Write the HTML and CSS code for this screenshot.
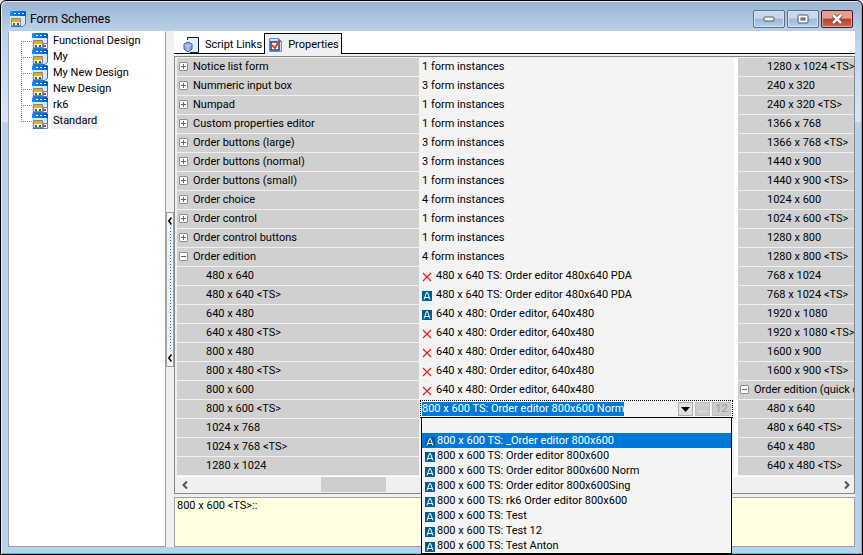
FILE: index.html
```html
<!DOCTYPE html>
<html lang="en">
<head>
    <meta charset="UTF-8">
    <meta name="viewport" content="width=device-width, initial-scale=1.0">
    <title>Form Schemes</title>
    <link rel="stylesheet" href="styles.css">
</head>
<body>
    <!-- shared icons -->
    <svg class="defs">
        <defs>
            <linearGradient id="bar" x1="0" y1="0" x2="1" y2="0">
                <stop offset="0" stop-color="#1a8cf0"/>
                <stop offset="1" stop-color="#0058b8"/>
            </linearGradient>
            <symbol id="form" viewBox="0 0 16 16">
                <path d="M0 4h16v9l-3 3H0z" fill="#d4e9fb"/>
                <path d="M0 1l1-1h14l1 1v4H0z" fill="url(#bar)"/>
                <path d="M4 2h2v1H4zM8 2h2v1H8zM12 2h2v1h-2z" fill="#fff"/>
                <path d="M15.500 5v8l-2.500 2.500H1" fill="none" stroke="#2a78cc"/>
                <path d="M1.500 7.500h9v7h-9z" fill="#f4f4f4" stroke="#85858d"/>
                <path d="M2 8h8v3H2z" fill="#e5b012"/>
                <path d="M3 12h2v2H3z" fill="#178a20"/>
                <path d="M7 12h2v2H7z" fill="#1d50d8"/>
            </symbol>
            <symbol id="formlock" viewBox="0 0 16 16">
                <use href="#form"/>
                <path d="M11.500 10.500h4v5h-4z" fill="#fff" stroke="#6d7ca8"/>
                <path d="M12 12h2v2h-2z" fill="#f02838"/>
            </symbol>
            <symbol id="cross" viewBox="0 0 10 10">
                <path d="M1 1l8 8M9 1l-8 8" stroke="#f01414" stroke-width="1.100"/>
            </symbol>
            <symbol id="abox" viewBox="0 0 10 10">
                <path d="M0 0h10v10H0z" fill="#005f98"/>
                <path d="M2 8.500L4.500 1.500h1L8 8.500M3 6.500h4" fill="none" stroke="#fff"/>
            </symbol>
        </defs>
    </svg>

    <div class="window">
        <header class="titlebar">
            <svg class="icon16"><use href="#form"/></svg>
            <h1>Form Schemes</h1>
            <button class="winbtn" aria-label="Minimize"><svg width="12" height="6"><rect x="1" y="1" width="10" height="4" rx="1" fill="#fff" stroke="#535666"/></svg></button>
            <button class="winbtn" aria-label="Maximize"><svg width="12" height="10"><rect x="1" y="1" width="10" height="8" rx="1" fill="#fff" stroke="#535666"/><rect x="4" y="4" width="4" height="2" fill="#8ba9cc" stroke="#535666"/></svg></button>
            <button class="winbtn close" aria-label="Close"><svg width="12" height="10"><path d="M2 1l8 8M10 1L2 9" stroke="#5c3434" stroke-width="4"/><path d="M2 1l8 8M10 1L2 9" stroke="#fff" stroke-width="2.500"/></svg></button>
        </header>

        <div class="client">
            <ul class="tree">
                <li><svg class="icon16"><use href="#formlock"/></svg><span>Functional Design</span></li>
                <li><svg class="icon16"><use href="#form"/></svg><span>My</span></li>
                <li><svg class="icon16"><use href="#form"/></svg><span>My New Design</span></li>
                <li><svg class="icon16"><use href="#formlock"/></svg><span>New Design</span></li>
                <li><svg class="icon16"><use href="#formlock"/></svg><span>rk6</span></li>
                <li class="current"><svg class="icon16"><use href="#formlock"/></svg><span>Standard</span></li>
            </ul>

            <div class="splitter">
                <button class="grip" aria-label="Collapse">
                    <svg width="4" height="8"><path d="M3.500 .5L.8 4l2.700 3.500" fill="none" stroke="#000" stroke-width="1.500"/></svg>
                    <span></span>
                    <svg width="4" height="8"><path d="M3.500 .5L.8 4l2.700 3.500" fill="none" stroke="#000" stroke-width="1.500"/></svg>
                </button>
            </div>

            <main class="content">
                <nav class="tabs">
                    <button class="tab">
                        <svg class="icon16" viewBox="0 0 16 16"><path d="M4.500 .5h11v15h-8l-3-3z" fill="#dceefb"/><path d="M4.500 3V.5h11v15H7" fill="none" stroke="#101820"/><path d="M1 7l4-2 4 2v5l-4 3-4-3z" fill="#91a8e8" stroke="#3f5ba0"/><path d="M1.500 7.500L5 9l3.500-1.500M5 9v5" fill="none" stroke="#c9d6fb"/></svg>
                        Script Links
                    </button>
                    <button class="tab active">
                        <svg class="icon16" viewBox="0 0 16 16"><path d="M2.500 1.500h9l3 3v10h-12z" fill="#c4e2fb" stroke="#5b93cf"/><path d="M11 1v4h4z" fill="#3d7fd0"/><path d="M4 5h8v8H4z" fill="#fff" stroke="#16418a" stroke-width="1.500"/><path d="M5 8l3 3 4-7" fill="none" stroke="#e9401c" stroke-width="2"/></svg>
                        Properties
                    </button>
                </nav>

                <section class="grid">
                    <div class="panes">
                        <table class="pane main">
                            <tr><th><button class="exp plus"></button>Notice list form</th><td>1 form instances</td></tr>
                            <tr><th><button class="exp plus"></button>Nummeric input box</th><td>3 form instances</td></tr>
                            <tr><th><button class="exp plus"></button>Numpad</th><td>1 form instances</td></tr>
                            <tr><th><button class="exp plus"></button>Custom properties editor</th><td>1 form instances</td></tr>
                            <tr><th><button class="exp plus"></button>Order buttons (large)</th><td>3 form instances</td></tr>
                            <tr><th><button class="exp plus"></button>Order buttons (normal)</th><td>3 form instances</td></tr>
                            <tr><th><button class="exp plus"></button>Order buttons (small)</th><td>1 form instances</td></tr>
                            <tr><th><button class="exp plus"></button>Order choice</th><td>4 form instances</td></tr>
                            <tr><th><button class="exp plus"></button>Order control</th><td>1 form instances</td></tr>
                            <tr><th><button class="exp plus"></button>Order control buttons</th><td>1 form instances</td></tr>
                            <tr><th><button class="exp"></button>Order edition</th><td>4 form instances</td></tr>
                            <tr><th class="sub">480 x 640</th><td><svg class="mark"><use href="#cross"/></svg>480 x 640 TS: Order editor 480x640 PDA</td></tr>
                            <tr><th class="sub">480 x 640 &lt;TS&gt;</th><td><svg class="mark"><use href="#abox"/></svg>480 x 640 TS: Order editor 480x640 PDA</td></tr>
                            <tr><th class="sub">640 x 480</th><td><svg class="mark"><use href="#abox"/></svg>640 x 480: Order editor, 640x480</td></tr>
                            <tr><th class="sub">640 x 480 &lt;TS&gt;</th><td><svg class="mark"><use href="#cross"/></svg>640 x 480: Order editor, 640x480</td></tr>
                            <tr><th class="sub">800 x 480</th><td><svg class="mark"><use href="#cross"/></svg>640 x 480: Order editor, 640x480</td></tr>
                            <tr><th class="sub">800 x 480 &lt;TS&gt;</th><td><svg class="mark"><use href="#cross"/></svg>640 x 480: Order editor, 640x480</td></tr>
                            <tr><th class="sub">800 x 600</th><td><svg class="mark"><use href="#cross"/></svg>640 x 480: Order editor, 640x480</td></tr>
                            <tr>
                                <th class="sub"><label for="scheme">800 x 600 &lt;TS&gt;</label></th>
                                <td class="editing">
                                    <div class="editor">
                                        <input type="text" id="scheme" value="800 x 600 TS: Order editor 800x600 Norm">
                                        <button class="small" aria-label="Open list"><svg width="9" height="5"><path d="M0 0h9L4.500 5z"/></svg></button>
                                        <button class="small" disabled>...</button>
                                        <button class="small wide" disabled>12</button>
                                    </div>
                                    <ul class="options" role="listbox">
                                        <li role="option"></li>
                                        <li role="option" class="selected"><svg class="mark"><use href="#abox"/></svg>800 x 600 TS: _Order editor 800x600</li>
                                        <li role="option"><svg class="mark"><use href="#abox"/></svg>800 x 600 TS: Order editor 800x600</li>
                                        <li role="option"><svg class="mark"><use href="#abox"/></svg>800 x 600 TS: Order editor 800x600 Norm</li>
                                        <li role="option"><svg class="mark"><use href="#abox"/></svg>800 x 600 TS: Order editor 800x600Sing</li>
                                        <li role="option"><svg class="mark"><use href="#abox"/></svg>800 x 600 TS: rk6 Order editor 800x600</li>
                                        <li role="option"><svg class="mark"><use href="#abox"/></svg>800 x 600 TS: Test</li>
                                        <li role="option"><svg class="mark"><use href="#abox"/></svg>800 x 600 TS: Test 12</li>
                                        <li role="option"><svg class="mark"><use href="#abox"/></svg>800 x 600 TS: Test Anton</li>
                                    </ul>
                                </td>
                            </tr>
                            <tr><th class="sub">1024 x 768</th><td></td></tr>
                            <tr><th class="sub">1024 x 768 &lt;TS&gt;</th><td></td></tr>
                            <tr><th class="sub">1280 x 1024</th><td></td></tr>
                        </table>
                        <table class="pane more">
                            <tr><th class="sub">1280 x 1024 &lt;TS&gt;</th></tr>
                            <tr><th class="sub">240 x 320</th></tr>
                            <tr><th class="sub">240 x 320 &lt;TS&gt;</th></tr>
                            <tr><th class="sub">1366 x 768</th></tr>
                            <tr><th class="sub">1366 x 768 &lt;TS&gt;</th></tr>
                            <tr><th class="sub">1440 x 900</th></tr>
                            <tr><th class="sub">1440 x 900 &lt;TS&gt;</th></tr>
                            <tr><th class="sub">1024 x 600</th></tr>
                            <tr><th class="sub">1024 x 600 &lt;TS&gt;</th></tr>
                            <tr><th class="sub">1280 x 800</th></tr>
                            <tr><th class="sub">1280 x 800 &lt;TS&gt;</th></tr>
                            <tr><th class="sub">768 x 1024</th></tr>
                            <tr><th class="sub">768 x 1024 &lt;TS&gt;</th></tr>
                            <tr><th class="sub">1920 x 1080</th></tr>
                            <tr><th class="sub">1920 x 1080 &lt;TS&gt;</th></tr>
                            <tr><th class="sub">1600 x 900</th></tr>
                            <tr><th class="sub">1600 x 900 &lt;TS&gt;</th></tr>
                            <tr><th><button class="exp"></button>Order edition (quick c</th></tr>
                            <tr><th class="sub">480 x 640</th></tr>
                            <tr><th class="sub">480 x 640 &lt;TS&gt;</th></tr>
                            <tr><th class="sub">640 x 480</th></tr>
                            <tr><th class="sub">640 x 480 &lt;TS&gt;</th></tr>
                        </table>
                    </div>
                    <div class="scrollbar">
                        <button aria-label="Scroll left"><svg width="6" height="8"><path d="M5 .5L1.500 4 5 7.500" fill="none" stroke="#505050" stroke-width="2"/></svg></button>
                        <div class="track"><div class="thumb"></div></div>
                        <button aria-label="Scroll right"><svg width="6" height="8"><path d="M1 .5L4.500 4 1 7.500" fill="none" stroke="#505050" stroke-width="2"/></svg></button>
                    </div>
                </section>

                <textarea class="hint" aria-label="Description" readonly>800 x 600 &lt;TS&gt;::</textarea>
            </main>
        </div>
    </div>
</body>
</html>
```

FILE: styles.css
```css
* {
    box-sizing: border-box;
}
body {
    margin: 0;
    background-color: #e8e8e8;
    color: #000;
    font-family: "Roboto", "Liberation Sans", sans-serif;
    font-size: 11px;
    line-height: 16px;
}
button, input, textarea {
    font: inherit;
    color: inherit;
    margin: 0;
    padding: 0;
    border: none;
    border-radius: 0;
    background: none;
}
svg {
    display: block;
    flex: none;
}
ul {
    list-style: none;
    margin: 0;
    padding: 0;
}
.defs {
    position: absolute;
    width: 0;
    height: 0;
}
.icon16 {
    width: 16px;
    height: 16px;
}

/* window frame */
.window {
    display: flex;
    flex-direction: column;
    height: 100vh;
    padding: 0 7px 7px;
    border: 1px solid #000;
    border-radius: 6px 6px 0 0;
    background: linear-gradient(#99b4d1, #b9d1ea 30px, #dbe8f6 120px, #b9d1ea 122px);
    box-shadow: inset 1px 1px #e4eef8, inset -1px -1px #3cc4e4;
}
.titlebar {
    display: flex;
    align-items: center;
    flex: none;
    gap: 2px;
    height: 30px;
    padding: 6px 2px 0 2px;
}
h1 {
    flex: 1;
    margin: 0 0 0 2px;
    font-size: 12px;
    font-weight: normal;
    line-height: 16px;
}
.winbtn {
    display: flex;
    align-items: center;
    justify-content: center;
    width: 32px;
    height: 18px;
    border: 1px solid #5c6f8c;
    border-radius: 2px;
    background: linear-gradient(#c5d8ec 45%, #9bb8d6 50%, #b8d0e8);
    box-shadow: inset 0 0 0 1px #d5e4f3;
}
.winbtn.close {
    border-color: #4c1520;
    background: linear-gradient(#e2a093 45%, #b93d27 50%, #cc6a50);
    box-shadow: inset 0 0 0 1px #e2a79b;
}
.client {
    display: flex;
    flex: 1;
    min-height: 0;
    background-color: #f0f0f0;
}

/* scheme list */
.tree {
    flex: none;
    width: 158px;
    padding: 1px 0 0 12px;
    border: 1px solid #a0a0a0;
    border-top-color: #fff;
    background-color: #fff;
}
.tree li {
    display: flex;
    align-items: center;
    height: 16px;
    background: repeating-linear-gradient(#808080 0 1px, transparent 1px 2px) 0 0 / 1px 100% no-repeat,
                repeating-linear-gradient(90deg, #808080 0 1px, transparent 1px 2px) 0 8px / 11px 1px no-repeat;
    padding-left: 11px;
}
.tree li:first-child {
    background-position: 0 8px;
}
.tree li:last-child {
    background-size: 1px 8px, 11px 1px;
}
.tree span {
    margin-left: 3px;
    padding: 0 2px;
}
.tree .current span {
    background-color: #f0f0f0;
}
.splitter {
    display: flex;
    align-items: center;
    flex: none;
    width: 8px;
}
.grip {
    display: flex;
    flex-direction: column;
    align-items: center;
    width: 8px;
    height: 155px;
    padding: 4px 0;
    border: 1px solid #a0a0a0;
    background-color: #f4f4f4;
}
.grip span {
    flex: 1;
    width: 1px;
    margin: 3px 0;
    background: repeating-linear-gradient(#0078d7 0 1px, transparent 1px 3px);
}

/* tabs */
.content {
    display: flex;
    flex: 1;
    flex-direction: column;
    min-width: 0;
}
.tabs {
    display: flex;
    flex: none;
    height: 23px;
    padding: 2px 0 0 9px;
    border-bottom: 1px solid #000;
    background-color: #fff;
}
.tab {
    display: flex;
    align-items: center;
    gap: 6px;
    height: 20px;
    padding: 3px 2px 0 0;
}
.tab.active {
    gap: 5px;
    height: 21px;
    padding: 2px 2px 0;
    border: 1px solid #000;
    border-bottom: none;
    background-color: #f0f0f0;
}

/* property grid */
.grid {
    flex: none;
    margin-top: 2px;
    padding: 1px 0 0 2px;
    border: 1px solid #828790;
}
.panes {
    display: flex;
    gap: 4px;
    background: #fff;
}
.pane {
    table-layout: fixed;
    border-collapse: separate;
    border-spacing: 0;
}
.pane.main {
    flex: 1;
    width: 0;
}
.pane.more {
    flex: none;
    width: 116px;
}
.pane th, .pane td {
    height: 19px;
    padding: 0 0 0 2px;
    border-bottom: 1px solid #f0f0f0;
    font-weight: normal;
    text-align: left;
    line-height: 18px;
    white-space: nowrap;
}
.pane th {
    width: 243px;
    border-right: 1px solid #f4f4f4;
    background-color: #d0d0d0;
    overflow: hidden;
}
.pane.more th {
    width: 116px;
    border-right: none;
}
.pane th.sub {
    padding-left: 29px;
}
.pane td {
    background-color: #f4f4f4;
}
.exp {
    display: inline-block;
    width: 9px;
    height: 9px;
    margin-right: 5px;
    border: 1px solid #8e8f8f;
    border-radius: 1px;
    background: linear-gradient(#4b63a7, #4b63a7) center / 5px 1px no-repeat, #fff;
}
.exp.plus {
    background: linear-gradient(#4b63a7, #4b63a7) center / 5px 1px no-repeat,
                linear-gradient(#4b63a7, #4b63a7) center / 1px 5px no-repeat, #fff;
}
.mark {
    display: inline-block;
    width: 10px;
    height: 10px;
    margin-right: 4px;
    vertical-align: -3px;
}

/* cell editor with its list */
.pane td.editing {
    position: relative;
    padding: 0;
}
.editor {
    display: flex;
    align-items: center;
    gap: 2px;
    height: 18px;
    margin-right: 1px;
    padding: 0 1px;
    border: 1px dotted #000;
    border-bottom: 1px solid #000;
}
.editor input {
    width: 202px;
    height: 14px;
    margin-right: auto;
    background-color: #0078d7;
    color: #fff;
}
.small {
    display: flex;
    align-items: center;
    justify-content: center;
    width: 15px;
    height: 14px;
    border: 1px solid #adadad;
    background-color: #e1e1e1;
}
.small:disabled {
    background-color: #ccc;
    border-color: #bfbfbf;
    color: #fff;
}
.small.wide {
    width: 19px;
    color: #999;
}
.options {
    position: absolute;
    top: 17px;
    left: 1px;
    right: 2px;
    z-index: 1;
    border: 1px solid #000;
    background-color: #f4f4f4;
}
.options li {
    height: 15px;
    padding-left: 3px;
    line-height: 15px;
}
.options .mark {
    margin-right: 2px;
}
.options .selected {
    background-color: #0078d7;
    color: #fff;
}
.scrollbar {
    display: flex;
    height: 17px;
    border-top: 1px solid #fff;
}
.scrollbar button {
    display: flex;
    align-items: center;
    justify-content: center;
    width: 15px;
}
.track {
    flex: 1;
}
.thumb {
    width: 10%;
    height: 15px;
    margin-left: 20%;
    background-color: #cdcdcd;
}
.hint {
    flex: 1;
    min-height: 0;
    margin-top: 3px;
    padding: 0 2px;
    border: 1px solid #a0a0a0;
    background-color: #ffffe1;
    resize: none;
}
```
